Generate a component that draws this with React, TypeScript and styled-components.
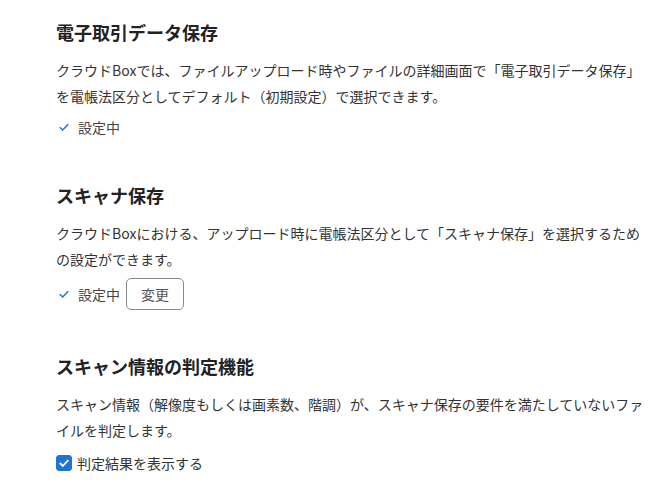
import React, { useState } from "react";
import styled, { createGlobalStyle } from "styled-components";

const GlobalStyle = createGlobalStyle`
  body {
    margin: 0;
    background: #fff;
    font-family: "Noto Sans CJK JP", "Noto Sans", sans-serif;
    color: #333;
  }
`;

function CheckMark() {
  return (
    <svg width="12" height="10" viewBox="0 0 12 10">
      <path d="M1.8 5.2 L4.7 8 L10.2 2.2" fill="none" stroke="#1f74d4" strokeWidth="1.5" />
    </svg>
  );
}

export default function App() {
  const [showResult, setShowResult] = useState(true);

  return (
    <Page>
      <GlobalStyle />
      <Section>
        <Title>電子取引データ保存</Title>
        <Description>
          クラウドBoxでは、ファイルアップロード時やファイルの詳細画面で「電子取引データ保存」を電帳法区分としてデフォルト（初期設定）で選択できます。
        </Description>
        <StatusRow>
          <Status>
            <CheckMark />
            <span>設定中</span>
          </Status>
        </StatusRow>
      </Section>

      <Section>
        <Title>スキャナ保存</Title>
        <Description>
          クラウドBoxにおける、アップロード時に電帳法区分として「スキャナ保存」を選択するための設定ができます。
        </Description>
        <StatusRow>
          <Status>
            <CheckMark />
            <span>設定中</span>
          </Status>
          <ChangeButton>変更</ChangeButton>
        </StatusRow>
      </Section>

      <Section>
        <Title>スキャン情報の判定機能</Title>
        <Description>
          スキャン情報（解像度もしくは画素数、階調）が、スキャナ保存の要件を満たしていないファイルを判定します。
        </Description>
        <CheckLabel>
          <HiddenInput
            type="checkbox"
            checked={showResult}
            onChange={() => setShowResult(!showResult)}
          />
          <Box $checked={showResult}>
            {showResult && (
              <svg width="12" height="10" viewBox="0 0 12 10">
                <path d="M1.8 5 L4.8 8 L10.4 2" fill="none" stroke="#fff" strokeWidth="1.8" />
              </svg>
            )}
          </Box>
          判定結果を表示する
        </CheckLabel>
      </Section>
    </Page>
  );
}

const Page = styled.div`
  padding: 18px 0 0 56px;
  width: 592px;
  display: flex;
  flex-direction: column;
  gap: 42px;
`;

const Section = styled.section`
  display: flex;
  flex-direction: column;
`;

const Title = styled.h2`
  margin: 0 0 11px;
  font-size: 18px;
  line-height: 28px;
  font-weight: 700;
  color: #222;
`;

const Description = styled.p`
  margin: 0;
  font-size: 14px;
  line-height: 26px;
  color: #333;
`;

const StatusRow = styled.div`
  display: flex;
  align-items: center;
  gap: 6px;
  margin-top: 6px;
  min-height: 24px;
`;

const Status = styled.div`
  display: flex;
  align-items: center;
  gap: 8px;
  padding-left: 2px;
  font-size: 14px;
  color: #444;
`;

const ChangeButton = styled.button`
  width: 58px;
  height: 32px;
  border: 1px solid #8a8a8a;
  border-radius: 5px;
  background: #fff;
  font-family: inherit;
  font-size: 14px;
  color: #555;
  cursor: pointer;
`;

const CheckLabel = styled.label`
  display: flex;
  align-items: center;
  gap: 5px;
  margin-top: 10px;
  font-size: 14px;
  color: #333;
  cursor: pointer;
`;

const HiddenInput = styled.input`
  display: none;
`;

const Box = styled.span<{ $checked: boolean }>`
  width: 16px;
  height: 16px;
  border-radius: 3px;
  display: flex;
  align-items: center;
  justify-content: center;
  background: ${(p) => (p.$checked ? "#1f74d4" : "#fff")};
  border: 1px solid ${(p) => (p.$checked ? "#1f74d4" : "#888")};
  box-sizing: border-box;
`;
